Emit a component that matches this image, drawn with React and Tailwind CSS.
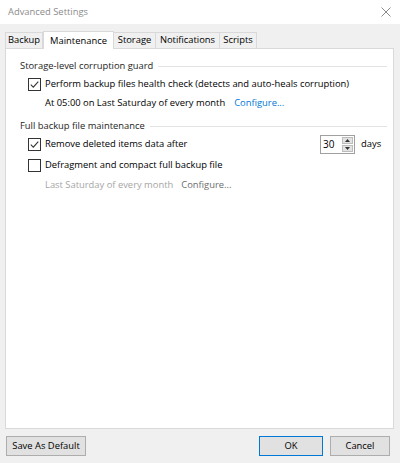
import React from 'react';

const font = { fontFamily: '"Open Sans", "Noto Sans", sans-serif' };

const Check = ({ checked }) => (
  <span className="w-[13px] h-[13px] border border-[#333] bg-white flex items-center justify-center shrink-0">
    {checked && (
      <svg width="11" height="11" viewBox="0 0 11 11">
        <path d="M1.8 5.6 L4.3 8.1 L9.3 2.6" fill="none" stroke="#333" strokeWidth="1.1" />
      </svg>
    )}
  </span>
);

const Group = ({ title, className = '' }) => (
  <div className={`flex items-center gap-[5px] h-[16px] ${className}`}>
    <span className="text-[#1e1e1e]">{title}</span>
    <div className="flex-1 h-px bg-[#e3e3e3]" />
  </div>
);

const tabs = [
  ['Backup', 'w-[38px]'],
  ['Maintenance', 'w-[71px]'],
  ['Storage', 'w-[42px]'],
  ['Notifications', 'w-[65px]'],
  ['Scripts', 'w-[38px]'],
];

export default function App() {
  return (
    <div className="w-[400px] h-[463px] bg-[#f0f0f0] flex flex-col text-[9.4px] text-black" style={font}>
      {/* title bar */}
      <div className="h-[24px] bg-white flex items-center justify-between pl-[8px] pr-[9px] shrink-0">
        <span className="text-[#8c8c8c] text-[9.4px]">Advanced Settings</span>
        <svg width="10" height="10" viewBox="0 0 10 10">
          <path d="M0.5 0.5 L9.5 9.5 M9.5 0.5 L0.5 9.5" stroke="#8a8a8a" strokeWidth="1" />
        </svg>
      </div>

      {/* tabs */}
      <div className="flex items-end pl-[5px] h-[24px] shrink-0">
        {tabs.map(([t, w], i) =>
          t === 'Maintenance' ? (
            <div key={t} className={`${w} h-[18px] bg-white border border-b-0 border-[#d9d9d9] flex justify-center pt-[2px] -mb-px relative z-10`}>
              {t}
            </div>
          ) : (
            <div
              key={t}
              className={`${w} h-[16px] bg-[#f0f0f0] border border-b-0 border-[#d9d9d9] flex items-center justify-center ${i === 0 ? '' : '-ml-px'} ${i === 2 ? 'border-l-0 ml-0' : ''}`}
            >
              {t}
            </div>
          )
        )}
      </div>

      {/* page */}
      <div className="mx-[5px] w-[389px] h-[381px] bg-white border border-[#d9d9d9] pl-[14px] pr-[6px] pt-[9px] shrink-0">
        <Group title="Storage-level corruption guard" />
        <div className="pl-[8px] mt-[2px] flex items-center gap-[4px] h-[16px]">
          <Check checked />
          <span>Perform backup files health check (detects and auto-heals corruption)</span>
        </div>
        <div className="pl-[25px] mt-[3px] flex items-center gap-[9px] h-[16px]">
          <span>At 05:00 on Last Saturday of every month</span>
          <span className="text-[#0078d7]">Configure...</span>
        </div>

        <Group title="Full backup file maintenance" className="mt-[7px]" />
        <div className="pl-[8px] mt-[1px] flex items-center h-[18px]">
          <Check checked />
          <span className="ml-[4px] flex-1">Remove deleted items data after</span>
          <div className="w-[35px] h-[19px] border border-[#a0a0a0] bg-white flex">
            <span className="flex-1 pl-[2px] leading-[17px] text-[10px]">30</span>
            <div className="w-[12px] flex flex-col gap-px py-px pr-px">
              <div className="flex-1 bg-[#e3e3e3] border border-[#bcbcbc] flex items-center justify-center">
                <svg width="5" height="3" viewBox="0 0 5 3"><path d="M0 3 L2.5 0 L5 3 Z" fill="#333" /></svg>
              </div>
              <div className="flex-1 bg-[#e3e3e3] border border-[#bcbcbc] flex items-center justify-center">
                <svg width="5" height="3" viewBox="0 0 5 3"><path d="M0 0 L2.5 3 L5 0 Z" fill="#333" /></svg>
              </div>
            </div>
          </div>
          <span className="ml-[6px] w-[26px]">days</span>
        </div>
        <div className="pl-[8px] mt-[3px] flex items-center gap-[4px] h-[18px]">
          <Check />
          <span>Defragment and compact full backup file</span>
        </div>
        <div className="pl-[25px] mt-[2px] flex items-center gap-[8px] h-[18px]">
          <span className="text-[#a6a6a6]">Last Saturday of every month</span>
          <span className="text-[#6d6d6d]">Configure...</span>
        </div>
      </div>

      {/* footer buttons */}
      <div className="flex items-center pl-[6px] pr-[10px] pt-[7px]">
        <button className="h-[20px] w-[80px] bg-[#e1e1e1] border border-[#adadad]">Save As Default</button>
        <div className="flex-1" />
        <button className="h-[20px] w-[64px] bg-[#e1e1e1] border border-[#0078d7]">OK</button>
        <button className="h-[20px] w-[60px] ml-[7px] bg-[#e1e1e1] border border-[#adadad]">Cancel</button>
      </div>
    </div>
  );
}
